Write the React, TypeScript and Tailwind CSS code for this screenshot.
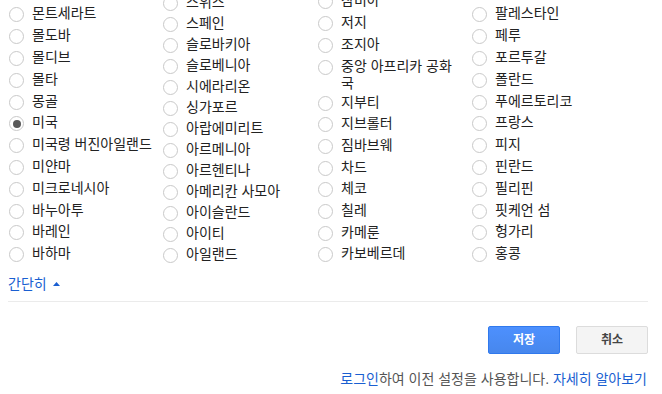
import React from 'react';

interface Region {
  name: string;
  checked?: boolean;
  wrap?: boolean;
}

// each column is bottom-aligned; the page is scrolled, so the top items get cut off
const columns: { pitch: string; items: Region[] }[] = [
  {
    pitch: 'h-[21.8px]',
    items: [
      { name: '몬트세라트' },
      { name: '몰도바' },
      { name: '몰디브' },
      { name: '몰타' },
      { name: '몽골' },
      { name: '미국', checked: true },
      { name: '미국령 버진아일랜드' },
      { name: '미얀마' },
      { name: '미크로네시아' },
      { name: '바누아투' },
      { name: '바레인' },
      { name: '바하마' },
    ],
  },
  {
    pitch: 'h-[21px]',
    items: [
      { name: '스위스' },
      { name: '스페인' },
      { name: '슬로바키아' },
      { name: '슬로베니아' },
      { name: '시에라리온' },
      { name: '싱가포르' },
      { name: '아랍에미리트' },
      { name: '아르메니아' },
      { name: '아르헨티나' },
      { name: '아메리칸 사모아' },
      { name: '아이슬란드' },
      { name: '아이티' },
      { name: '아일랜드' },
    ],
  },
  {
    pitch: 'h-[21.7px]',
    items: [
      { name: '잠비아' },
      { name: '저지' },
      { name: '조지아' },
      { name: '중앙 아프리카 공화국', wrap: true },
      { name: '지부티' },
      { name: '지브롤터' },
      { name: '짐바브웨' },
      { name: '차드' },
      { name: '체코' },
      { name: '칠레' },
      { name: '카메룬' },
      { name: '카보베르데' },
    ],
  },
  {
    pitch: 'h-[21.8px]',
    items: [
      { name: '팔레스타인' },
      { name: '페루' },
      { name: '포르투갈' },
      { name: '폴란드' },
      { name: '푸에르토리코' },
      { name: '프랑스' },
      { name: '피지' },
      { name: '핀란드' },
      { name: '필리핀' },
      { name: '핏케언 섬' },
      { name: '헝가리' },
      { name: '홍콩' },
    ],
  },
];

function Radio({ checked }: { checked?: boolean }) {
  return (
    <span className="flex h-[15px] w-[15px] shrink-0 items-center justify-center rounded-full border border-[#c9c9c9] bg-white">
      {checked && <span className="h-[8px] w-[8px] rounded-full bg-[#585858]" />}
    </span>
  );
}

export default function App() {
  return (
    <div
      className="h-[394px] w-[662px] overflow-hidden bg-white text-[14px] text-[#222]"
      style={{ fontFamily: '"Liberation Sans", "Noto Sans CJK KR", sans-serif' }}
    >
      <div className="flex h-[265px] items-end overflow-hidden pl-[9px]">
        <div className="grid grid-cols-[154px_155px_154px_154px] items-end">
          {columns.map((col, ci) => (
            <div key={ci} className="flex flex-col">
              {col.items.map((item) => (
                <label
                  key={item.name}
                  className={`flex shrink-0 items-start gap-[8px] ${item.wrap ? 'h-[36px] pr-[16px]' : col.pitch}`}
                >
                  <span className="pt-[4px]">
                    <Radio checked={item.checked} />
                  </span>
                  <span className={item.wrap ? 'pt-[2px] leading-[17px]' : 'pt-[3px] leading-[14px]'}>
                    {item.name}
                  </span>
                </label>
              ))}
            </div>
          ))}
        </div>
      </div>

      <div className="px-2">
        <div className="flex items-center gap-[6px] pt-[11px] leading-[16px] text-[#1a5fd1]">
          간단히
          <svg width="7" height="4" viewBox="0 0 7 4">
            <path d="M0 4 L3.5 0 L7 4 Z" fill="#1a5fd1" />
          </svg>
        </div>
        <div className="mt-[9px] w-[640px] border-t border-[#ebebeb]" />

        <div className="mt-[24px] flex w-[640px] justify-end gap-[16px]">
          <button className="h-[28px] w-[72px] rounded-[2px] border border-[#3079ed] bg-gradient-to-b from-[#4d90fe] to-[#4787ed] text-[12px] font-bold text-white">
            저장
          </button>
          <button className="h-[28px] w-[72px] rounded-[2px] border border-[#dcdcdc] bg-[#f4f4f4] text-[12px] font-bold text-[#444]">
            취소
          </button>
        </div>

        <p className="mt-[17px] w-[639px] text-right leading-[16px] text-[#555]">
          <span className="text-[#1a5fd1]">로그인</span>하여 이전 설정을 사용합니다.{' '}
          <span className="text-[#1a5fd1]">자세히 알아보기</span>
        </p>
      </div>
    </div>
  );
}
